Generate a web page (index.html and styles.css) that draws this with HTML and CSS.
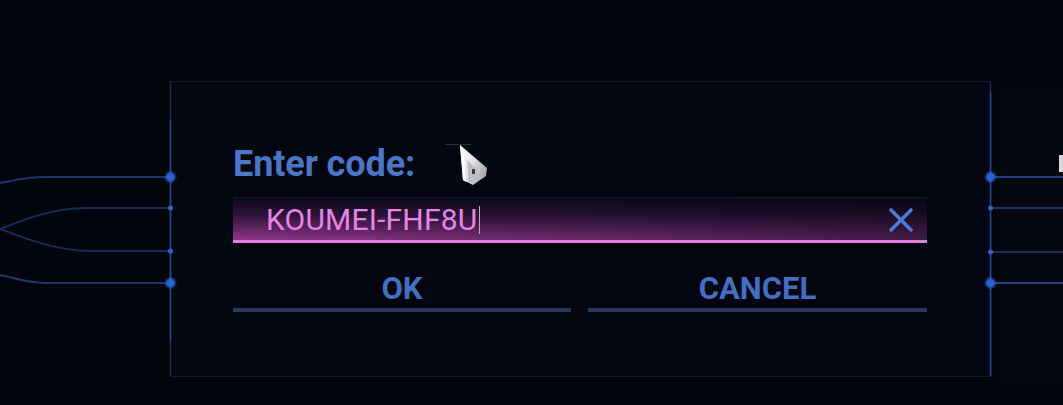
FILE: index.html
```html
<!DOCTYPE html>
<html lang="en">
<head>
<meta charset="utf-8">
<title>Enter code</title>
<link rel="stylesheet" href="styles.css">
</head>
<body>
<main class="stage">
  <section class="dialog">
    <h1 class="dialog-title">Enter code:</h1>
    <div class="field">
      <span class="field-value">KOUMEI-FHF8U</span><span class="caret"></span>
      <button class="clear" aria-label="Clear">
        <svg viewBox="0 0 26 26" width="26" height="26"><path d="M3 3 L23 23 M23 3 L3 23" stroke="#4d7ad6" stroke-width="3.6" stroke-linecap="round" fill="none"/></svg>
      </button>
    </div>
    <div class="actions">
      <button class="action">OK</button>
      <button class="action">CANCEL</button>
    </div>
  </section>
  <div class="side-panel"></div>
</main>

<svg class="wires" viewBox="0 0 1063 405" width="1063" height="405">
  <defs>
    <filter id="glow" x="-50%" y="-50%" width="200%" height="200%">
      <feGaussianBlur stdDeviation="1.2"/>
    </filter>
  </defs>
  <g fill="none" stroke="#1d3670" stroke-width="2">
    <path d="M170 177 H45 C25 177 12 181 0 183"/>
    <path d="M170 208 H85 C55 208 28 218 0 229" stroke="#172b58"/>
    <path d="M170 251 H90 C60 251 28 240 0 229" stroke="#172b58"/>
    <path d="M170 283 H45 C25 283 12 277 0 275"/>
    <path d="M990 177 H1063" stroke="#22407f"/>
    <path d="M990 208 H1063" stroke="#1a2e5c"/>
    <path d="M990 252 H1063" stroke="#1a2e5c"/>
    <path d="M990 283 H1063" stroke="#22407f"/>
  </g>
  <path d="M170.5 82 V376" stroke="#1c2d5a" stroke-width="1.5"/>
  <path d="M170.5 120 V340" stroke="#27458a" stroke-width="1.5"/>
  <path d="M990.5 82 V376" stroke="#1c2d5a" stroke-width="1.5"/>
  <path d="M990.5 92 V376" stroke="#27458a" stroke-width="1.5"/>
  <g fill="#2e62d4">
    <circle cx="170.5" cy="177" r="5" filter="url(#glow)"/>
    <circle cx="170.5" cy="177" r="3.5"/>
    <circle cx="170.5" cy="208" r="2.5"/>
    <circle cx="170.5" cy="251" r="2.5"/>
    <circle cx="170.5" cy="283" r="5" filter="url(#glow)"/>
    <circle cx="170.5" cy="283" r="3.5"/>
    <circle cx="990.5" cy="177" r="5" filter="url(#glow)"/>
    <circle cx="990.5" cy="177" r="3.5"/>
    <circle cx="990.5" cy="208" r="2.5"/>
    <circle cx="990.5" cy="252" r="2.5"/>
    <circle cx="990.5" cy="283" r="5" filter="url(#glow)"/>
    <circle cx="990.5" cy="283" r="3.5"/>
  </g>
  <rect x="1059" y="155" width="4" height="17" fill="#d8d8dc"/>
</svg>

<svg class="pointer" viewBox="0 0 50 50" width="50" height="50">
  <defs>
    <linearGradient id="pg" x1="0" y1="0" x2="1" y2="0.6">
      <stop offset="0" stop-color="#ffffff"/>
      <stop offset="0.5" stop-color="#e4e4e8"/>
      <stop offset="1" stop-color="#a8a8ae"/>
    </linearGradient>
  </defs>
  <path d="M0 4.5 H26" stroke="#2c2f3c" stroke-width="1"/>
  <polygon points="15,5 42,28 41,36 28,45 18,40" fill="url(#pg)"/>
  <polygon points="15,5 18,40 21,42 19,14" fill="#ffffff"/>
  <polygon points="22,20 33,30 30,42 24,42" fill="#bdbdc3"/>
  <rect x="27" y="29" width="3" height="5" fill="#3a3a42"/>
</svg>
</body>
</html>
```
FILE: styles.css
```css
html, body {
  margin: 0;
  padding: 0;
}

body {
  width: 1063px;
  height: 405px;
  overflow: hidden;
  background: #03050d;
  font-family: Roboto, "Liberation Sans", sans-serif;
  position: relative;
}

.stage {
  display: flex;
  align-items: flex-start;
  padding-top: 81px;
  padding-left: 170px;
}

.dialog {
  box-sizing: border-box;
  width: 821px;
  height: 296px;
  background: #030510;
  border: 1px solid #141a2c;
  padding: 64px 63px 0 62px;
  display: flex;
  flex-direction: column;
}

.dialog-title {
  margin: 0;
  font-size: 36px;
  line-height: 36px;
  font-weight: 700;
  color: #4b76c6;
  letter-spacing: -0.1px;
}

.field {
  margin-top: 15px;
  box-sizing: border-box;
  height: 46px;
  display: flex;
  align-items: center;
  padding-left: 33px;
  padding-top: 2px;
  border-top: 1px solid #1b1a2c;
  border-bottom: 3px solid #e27ddc;
  background:
    linear-gradient(to right, rgba(6,5,16,0) 0%, rgba(6,5,16,0.25) 50%, rgba(6,5,16,0.55) 100%),
    linear-gradient(to bottom, #0c0a19 0%, #2e1338 40%, #8e3588 100%);
}

.field-value {
  font-size: 30px;
  line-height: 30px;
  color: #e486e4;
  letter-spacing: 0.2px;
}

.caret {
  width: 1px;
  height: 28px;
  margin-left: 2px;
  background: #c9a0d6;
}

.clear {
  margin-left: auto;
  margin-right: 13px;
  width: 26px;
  height: 26px;
  padding: 0;
  border: 0;
  background: none;
  display: flex;
}

.actions {
  margin-top: 30px;
  display: grid;
  grid-template-columns: 338px 339px;
  column-gap: 17px;
}

.action {
  font-family: Roboto, "Liberation Sans", sans-serif;
  font-size: 31px;
  line-height: 31px;
  font-weight: 700;
  letter-spacing: 0;
  color: #426fc2;
  background: none;
  border: 0;
  border-bottom: 4px solid #28375c;
  padding: 0 0 4px 0;
  margin: 0;
  text-align: center;
}

.side-panel {
  margin-left: 10px;
  margin-top: 4px;
  width: 80px;
  height: 300px;
  background: #040610;
}

.wires {
  position: absolute;
  left: 0;
  top: 0;
  pointer-events: none;
}

.pointer {
  position: absolute;
  left: 445px;
  top: 140px;
  pointer-events: none;
  overflow: visible;
}
```
